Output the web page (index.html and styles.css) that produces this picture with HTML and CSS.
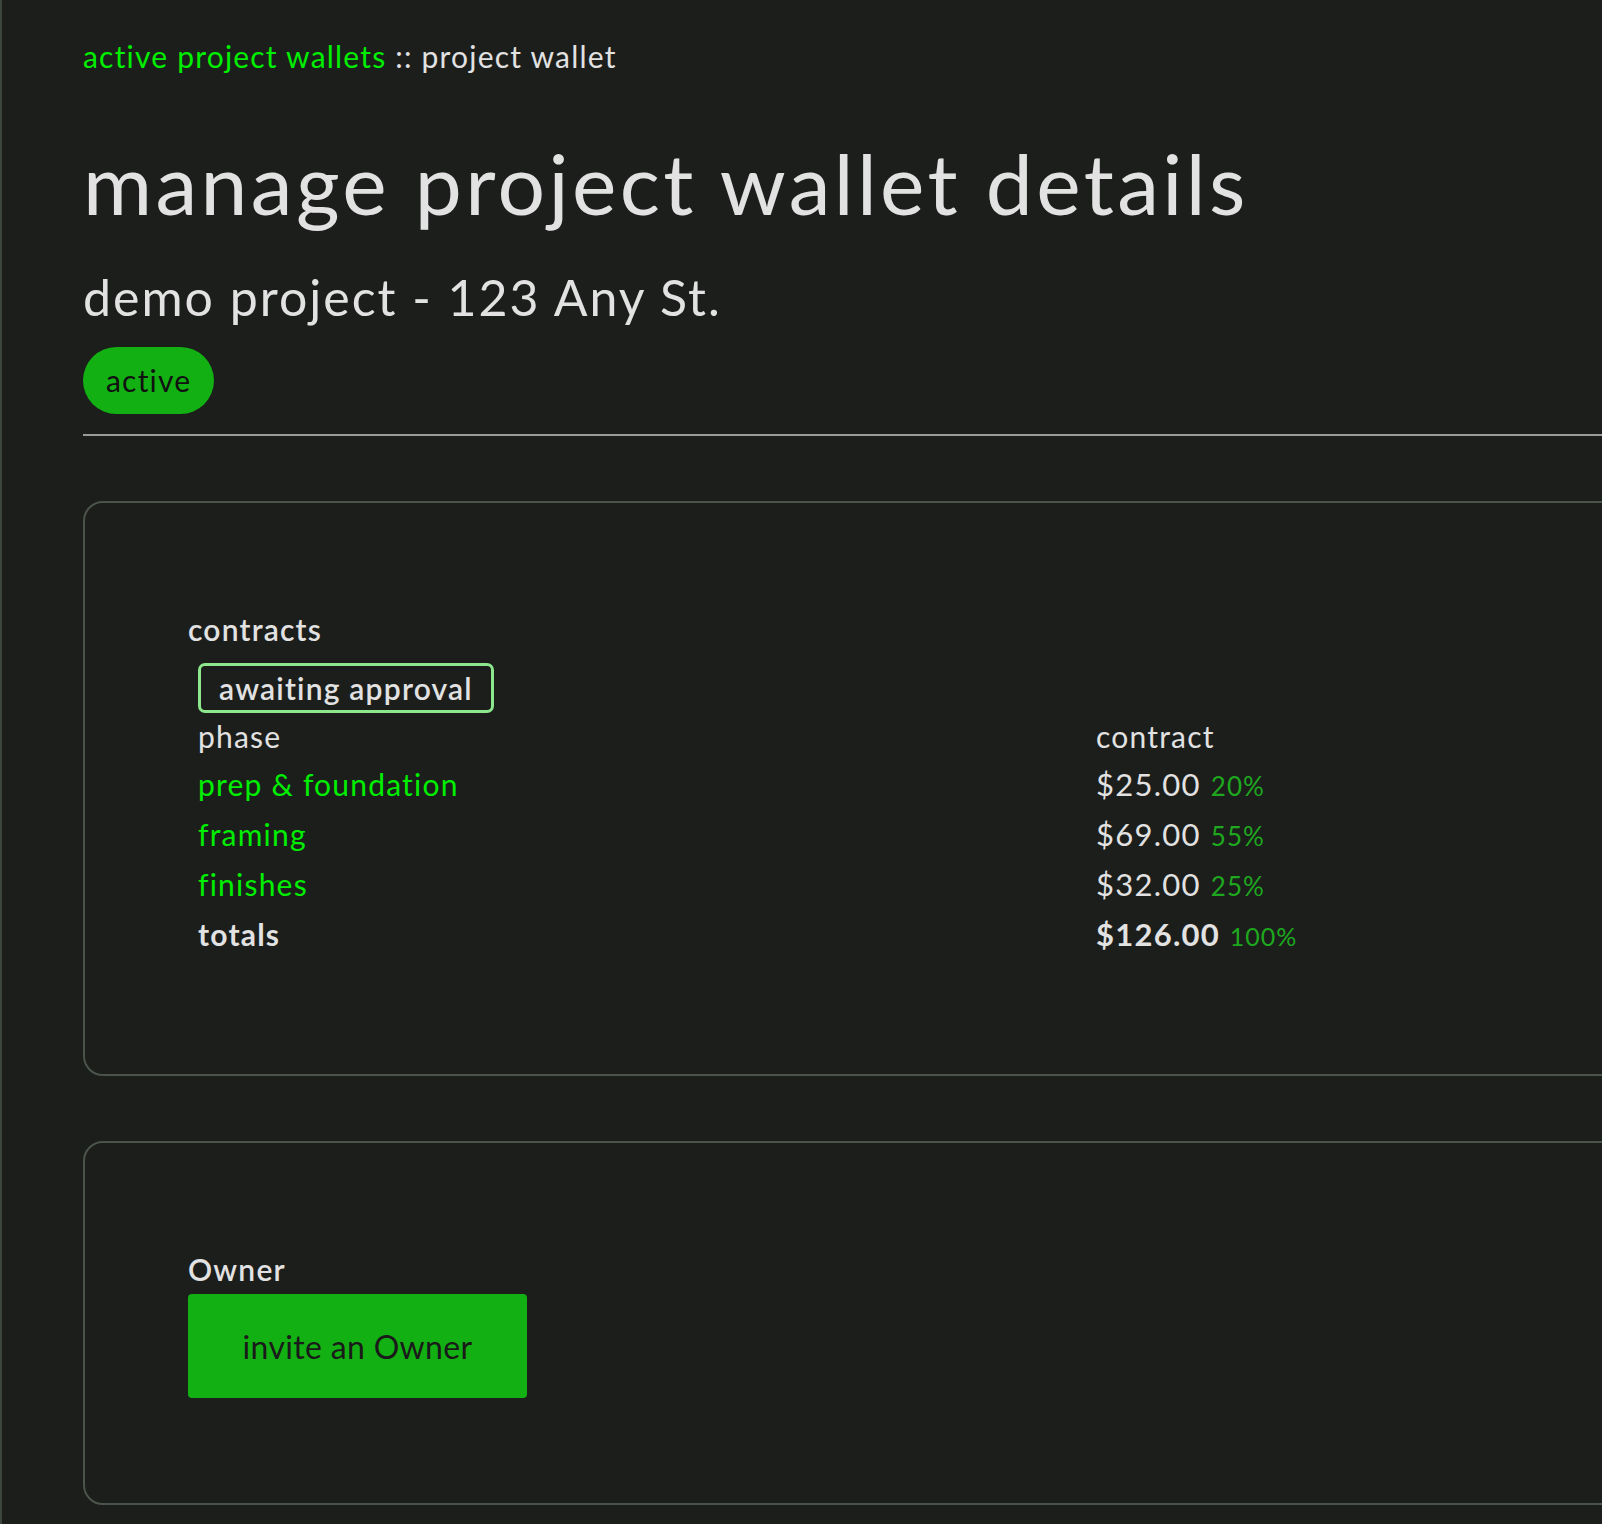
FILE: index.html
```html
<!DOCTYPE html>
<html>
  <head>
    <meta charset="UTF-8">
    <title>project wallet</title>
    <link rel="stylesheet" href="styles.css">
  </head>
  <body>
    <div class="app">
      <main class="content">
        <nav class="crumbs">
          <a href="#">active project wallets</a> :: project wallet
        </nav>

        <h1 class="title">manage project wallet details</h1>
        <h2 class="subtitle">demo project - 123 Any St.</h2>
        <span class="pill">active</span>

        <hr class="rule">

        <section class="card">
          <h3 class="card-label">contracts</h3>
          <div class="contracts">
            <span class="status">awaiting approval</span>
            <div class="phases">
              <div class="head">phase</div>
              <div class="head">contract</div>

              <a class="phase" href="#">prep &amp; foundation</a>
              <div class="amount">$25.00 <span class="pct">20%</span></div>

              <a class="phase" href="#">framing</a>
              <div class="amount">$69.00 <span class="pct">55%</span></div>

              <a class="phase" href="#">finishes</a>
              <div class="amount">$32.00 <span class="pct">25%</span></div>

              <div class="total">totals</div>
              <div class="amount total">$126.00 <span class="pct">100%</span></div>
            </div>
          </div>
        </section>

        <section class="card">
          <h3 class="card-label">Owner</h3>
          <button class="invite">invite an Owner</button>
        </section>
      </main>
    </div>
  </body>
</html>
```

FILE: styles.css
```css
html, body {
  margin: 0;
  background-color: #1c1e1c;
}

body {
  font-family: Lato, "Noto Sans", sans-serif;
  color: #e2e2e2;
}

body, body * {
  letter-spacing: 0.04em;
}

.app {
  border-left: 2px solid #3c463c;
  min-height: 1524px;
  overflow: hidden;
}

.content {
  width: 1700px;
  padding: 36px 0 20px 81px;
}

.crumbs {
  font-size: 30px;
  line-height: 40px;
}

.crumbs a {
  color: #00ee00;
  text-decoration: none;
}

.title {
  margin: 54px 0 0;
  font-size: 84px;
  line-height: 106px;
  font-weight: 400;
}

.subtitle {
  margin: 31px 0 0;
  font-size: 50px;
  line-height: 60px;
  font-weight: 400;
}

.pill {
  display: inline-block;
  margin-top: 20px;
  padding: 0 23px;
  height: 67px;
  line-height: 67px;
  border-radius: 34px;
  background-color: #12b012;
  color: #111;
  font-size: 30px;
}

.rule {
  margin: 20px 0 0;
  border: none;
  border-top: 2px solid #9a9a9a;
}

.card {
  margin-top: 65px;
  padding: 105px 103px;
  border: 2px solid #4a544a;
  border-radius: 20px;
}

.card-label {
  margin: 0;
  font-size: 30px;
  line-height: 42px;
  font-weight: 600;
}

.contracts {
  padding: 0 0 10px 10px;
}

.status {
  display: inline-block;
  margin-top: 13px;
  padding: 0 18px;
  height: 44px;
  line-height: 44px;
  border: 3px solid #8de88d;
  border-radius: 7px;
  font-size: 30px;
  font-weight: 600;
}

.phases {
  display: grid;
  grid-template-columns: 898px 1fr;
  grid-template-rows: 46px;
  grid-auto-rows: 50px;
  align-items: center;
  font-size: 30px;
}

.phase {
  color: #00ee00;
  text-decoration: none;
}

.amount {
  font-size: 31px;
}

.pct {
  margin-left: 1px;
  font-size: 26px;
  color: #1ea81e;
}

.total {
  font-weight: 700;
}

.amount.total .pct {
  font-weight: 400;
  font-size: 25px;
}

.invite {
  display: block;
  margin-top: 4px;
  width: 339px;
  height: 104px;
  border: none;
  border-radius: 4px;
  background-color: #12b012;
  color: #1a1a1a;
  font-family: inherit;
  font-size: 32px;
  cursor: pointer;
}

.invite {
  letter-spacing: 0.01em;
}
```
